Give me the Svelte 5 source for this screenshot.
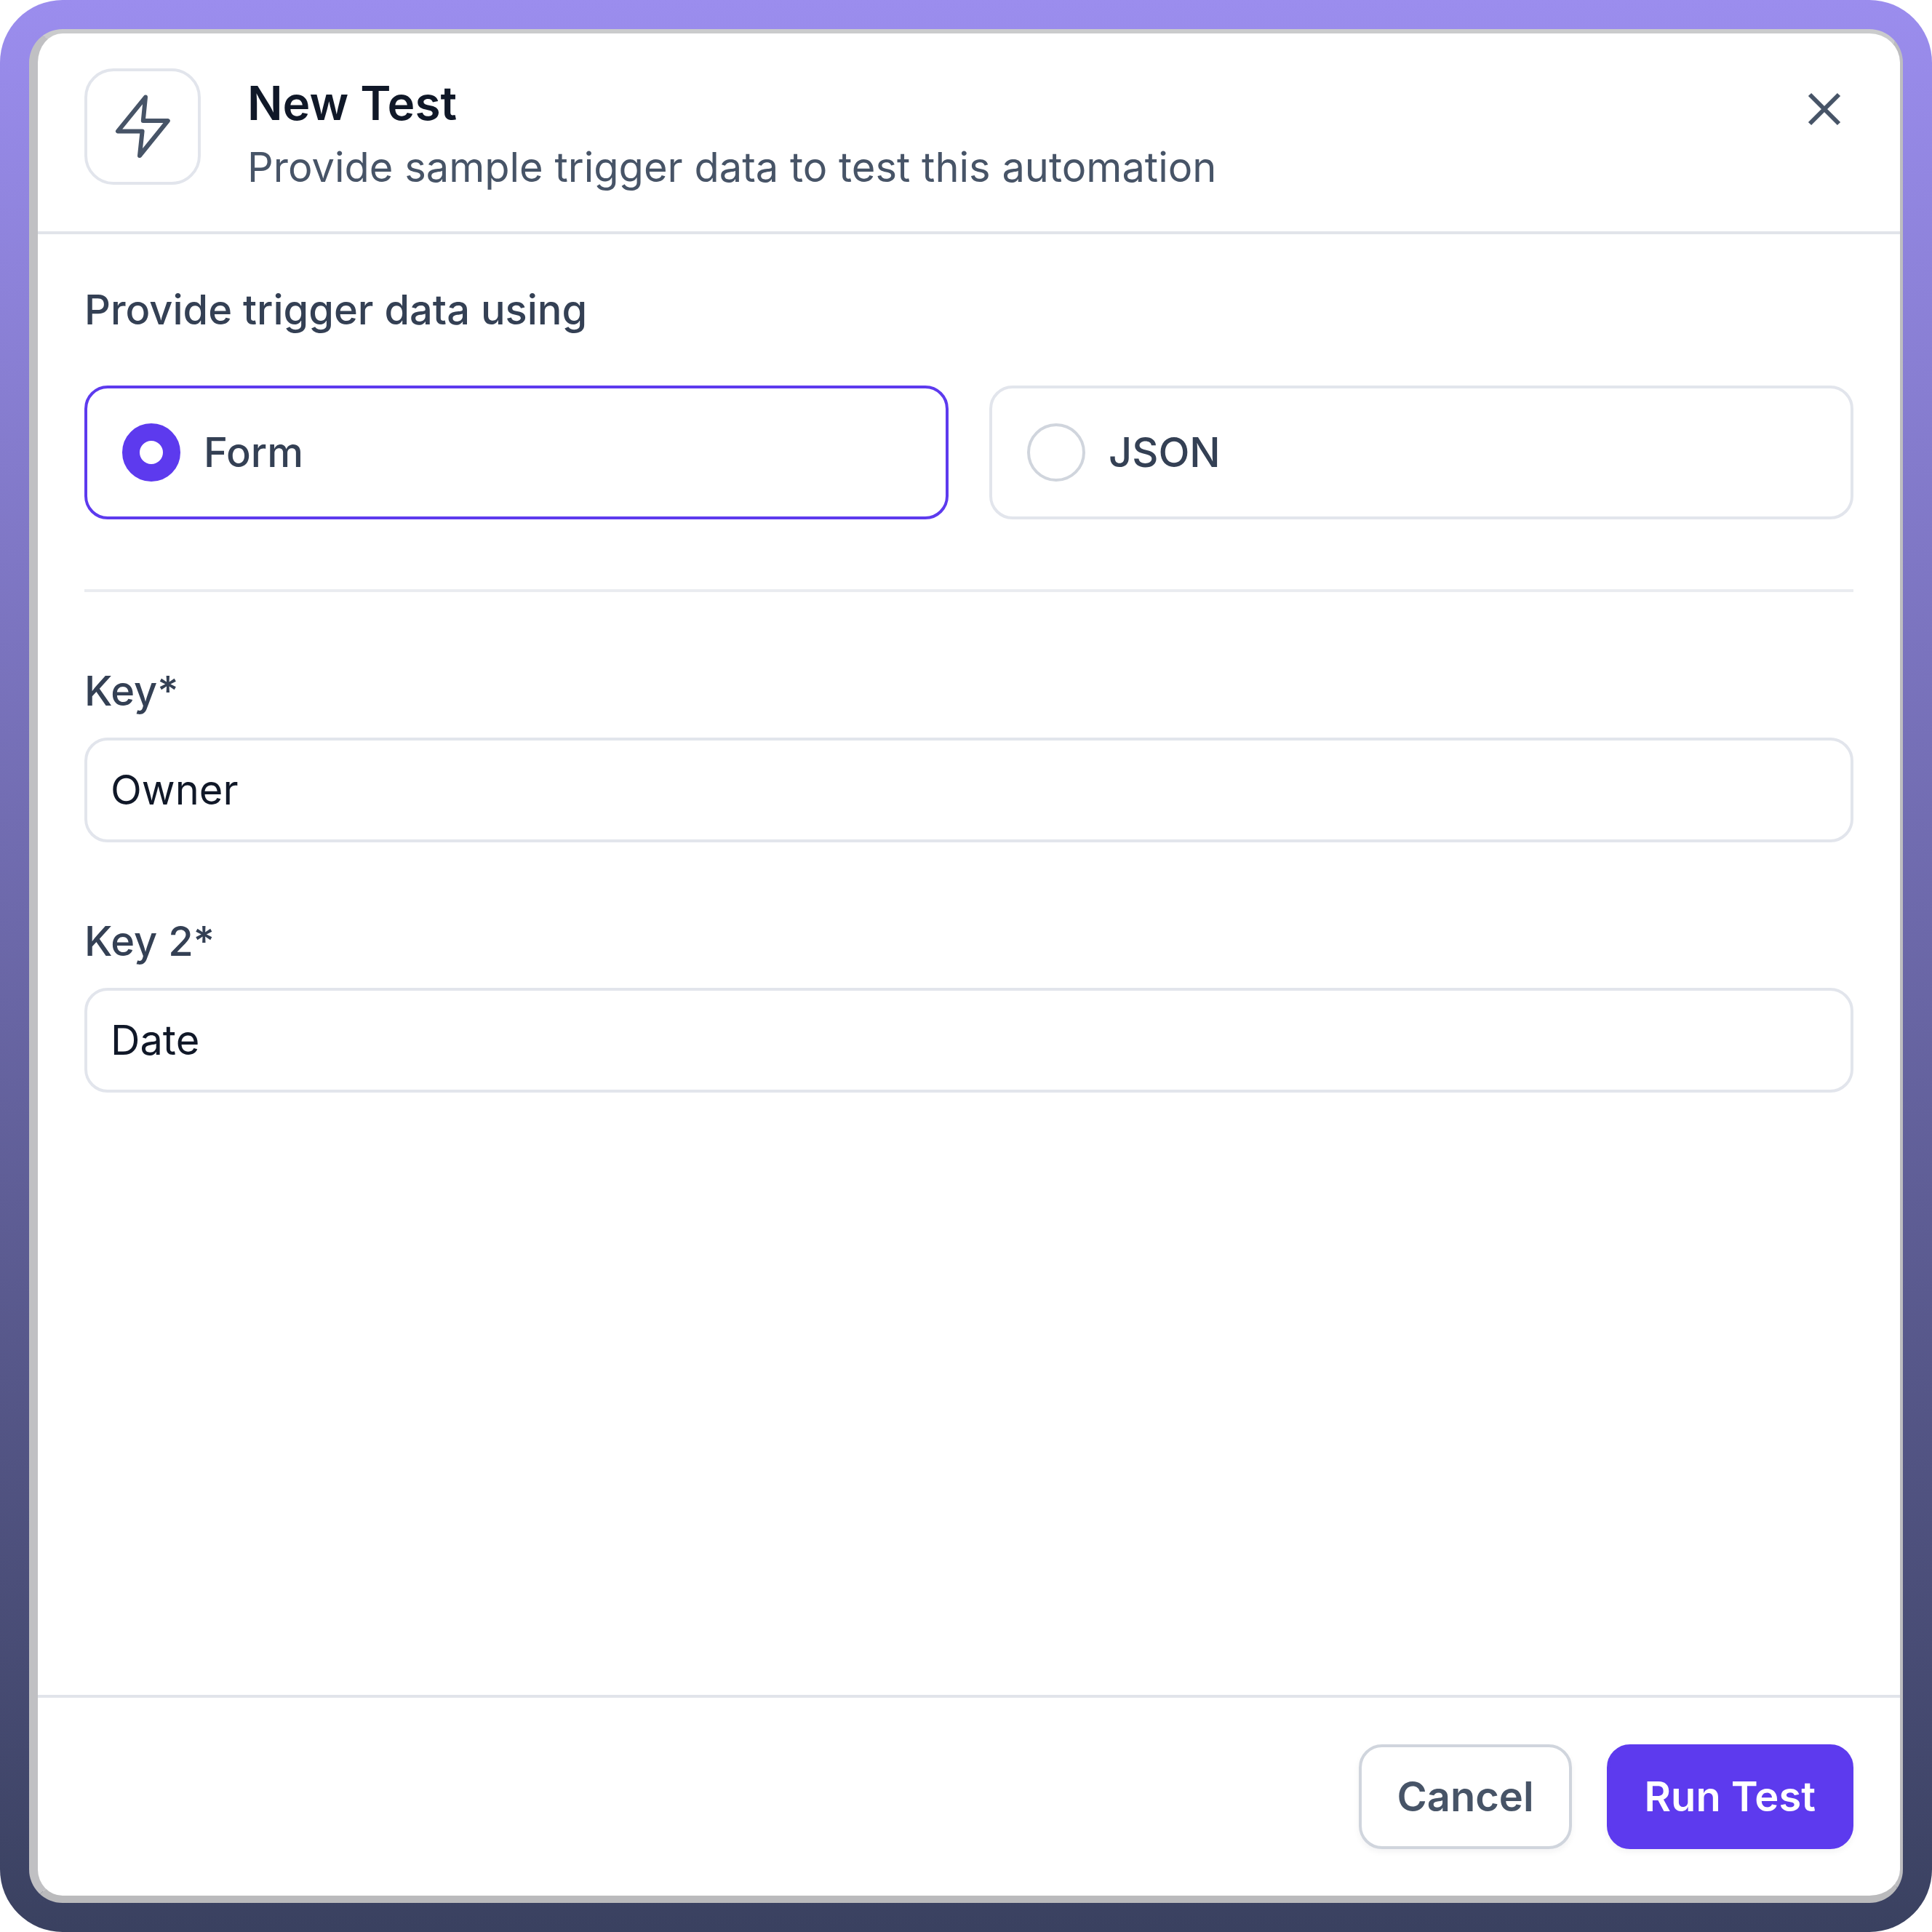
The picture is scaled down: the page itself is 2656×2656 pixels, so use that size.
<script>
  let mode = $state('form');
  let fields = [
    { label: 'Key*', value: 'Owner' },
    { label: 'Key 2*', value: 'Date' }
  ];
  let options = [
    { id: 'form', label: 'Form' },
    { id: 'json', label: 'JSON' }
  ];
</script>

<div class="frame">
  <div class="dialog">
    <header class="head">
      <div class="icon-box">
        <svg viewBox="0 0 24 24" class="bolt" fill="none" stroke="currentColor" stroke-width="1.5" stroke-linejoin="round" stroke-linecap="round">
          <path d="M13 1.9 3.5 13.6h8.4L11 22l9.7-12h-8.5z" />
        </svg>
      </div>
      <div class="titles">
        <h2>New Test</h2>
        <p>Provide sample trigger data to test this automation</p>
      </div>
      <button class="close" aria-label="Close">
        <svg viewBox="0 0 20 20" fill="none" stroke="currentColor" stroke-width="1.5">
          <path d="M15 5 5 15M5 5l10 10" />
        </svg>
      </button>
    </header>

    <main class="body">
      <div class="section-label">Provide trigger data using</div>
      <div class="options">
        {#each options as opt}
          <button class="option" class:selected={mode === opt.id} onclick={() => (mode = opt.id)}>
            <span class="radio"></span>
            <span>{opt.label}</span>
          </button>
        {/each}
      </div>
      <hr class="rule" />
      <div class="fields">
        {#each fields as f}
          <label class="field">
            <span>{f.label}</span>
            <input value={f.value} />
          </label>
        {/each}
      </div>
    </main>

    <footer class="foot">
      <button class="btn cancel">Cancel</button>
      <button class="btn run">Run Test</button>
    </footer>
  </div>
</div>

<style>
  :global(body) {
    margin: 0;
    background: #fff;
  }

  .frame {
    box-sizing: border-box;
    width: 2656px;
    height: 2656px;
    padding: 40px;
    border-radius: 86px;
    background: linear-gradient(180deg, #9b8dee 0%, #3a4160 100%);
    font-family: Inter, "Liberation Sans", sans-serif;
  }

  .dialog {
    box-sizing: border-box;
    height: 100%;
    display: flex;
    flex-direction: column;
    background: #fff;
    border-style: solid;
    border-width: 6px 4px 10px 12px;
    border-color: #cacbcc #bdbdc0 #bababc #c0c0c3;
    border-radius: 46px;
  }

  .head {
    display: flex;
    align-items: flex-start;
    gap: 64px;
    padding: 48px 64px;
    border-bottom: 4px solid #e1e4ea;
  }

  .icon-box {
    box-sizing: border-box;
    flex: none;
    width: 160px;
    height: 160px;
    display: flex;
    align-items: center;
    justify-content: center;
    border: 4px solid #e2e5ec;
    border-radius: 40px;
    color: #475467;
  }

  .bolt {
    width: 96px;
    height: 96px;
  }

  .titles {
    flex: 1;
  }

  h2 {
    margin: 0;
    font-size: 64px;
    line-height: 96px;
    font-weight: 600;
    color: #101828;
  }

  .titles p {
    margin: 0;
    font-size: 56px;
    line-height: 80px;
    color: #475467;
  }

  .close {
    flex: none;
    width: 80px;
    height: 80px;
    margin-top: 16px;
    padding: 0;
    border: 0;
    background: none;
    color: #475467;
  }

  .close svg {
    display: block;
    width: 80px;
    height: 80px;
  }

  .body {
    flex: 1;
    padding: 64px 64px 0;
  }

  .section-label {
    font-size: 56px;
    line-height: 80px;
    font-weight: 500;
    color: #344054;
  }

  .options {
    display: grid;
    grid-template-columns: 1fr 1fr;
    gap: 56px;
    margin-top: 64px;
  }

  .option {
    box-sizing: border-box;
    height: 184px;
    display: flex;
    align-items: center;
    gap: 32px;
    padding: 0 48px;
    background: #fff;
    border: 4px solid #e2e5ec;
    border-radius: 32px;
    font: 500 56px/80px Inter, "Liberation Sans", sans-serif;
    color: #344054;
  }

  .option.selected {
    border-color: #5d3aee;
  }

  .radio {
    box-sizing: border-box;
    flex: none;
    width: 80px;
    height: 80px;
    border-radius: 50%;
    border: 4px solid #d0d5dd;
  }

  .selected .radio {
    border: 24px solid #5d3aee;
  }

  .rule {
    height: 4px;
    margin: 96px 0;
    border: 0;
    background: #eaecf0;
  }

  .fields {
    display: flex;
    flex-direction: column;
    gap: 96px;
  }

  .field {
    display: flex;
    flex-direction: column;
    gap: 24px;
    font-size: 56px;
    line-height: 80px;
    font-weight: 500;
    color: #344054;
  }

  input {
    box-sizing: border-box;
    width: 100%;
    height: 144px;
    padding: 0 32px;
    border: 4px solid #e2e5ec;
    border-radius: 32px;
    outline: none;
    font: 400 56px/80px Inter, "Liberation Sans", sans-serif;
    color: #101828;
  }

  .foot {
    display: flex;
    justify-content: flex-end;
    gap: 48px;
    padding: 64px;
    border-top: 4px solid #e1e4ea;
  }

  .btn {
    box-sizing: border-box;
    height: 144px;
    padding: 0 48px;
    border-radius: 32px;
    font: 600 56px/80px Inter, "Liberation Sans", sans-serif;
    box-shadow: 0 4px 8px rgba(16, 24, 40, 0.05);
  }

  .cancel {
    background: #fff;
    border: 4px solid #d0d5dd;
    color: #475467;
  }

  .run {
    background: #5d3aee;
    border: 4px solid #5d3aee;
    color: #fff;
  }
</style>
